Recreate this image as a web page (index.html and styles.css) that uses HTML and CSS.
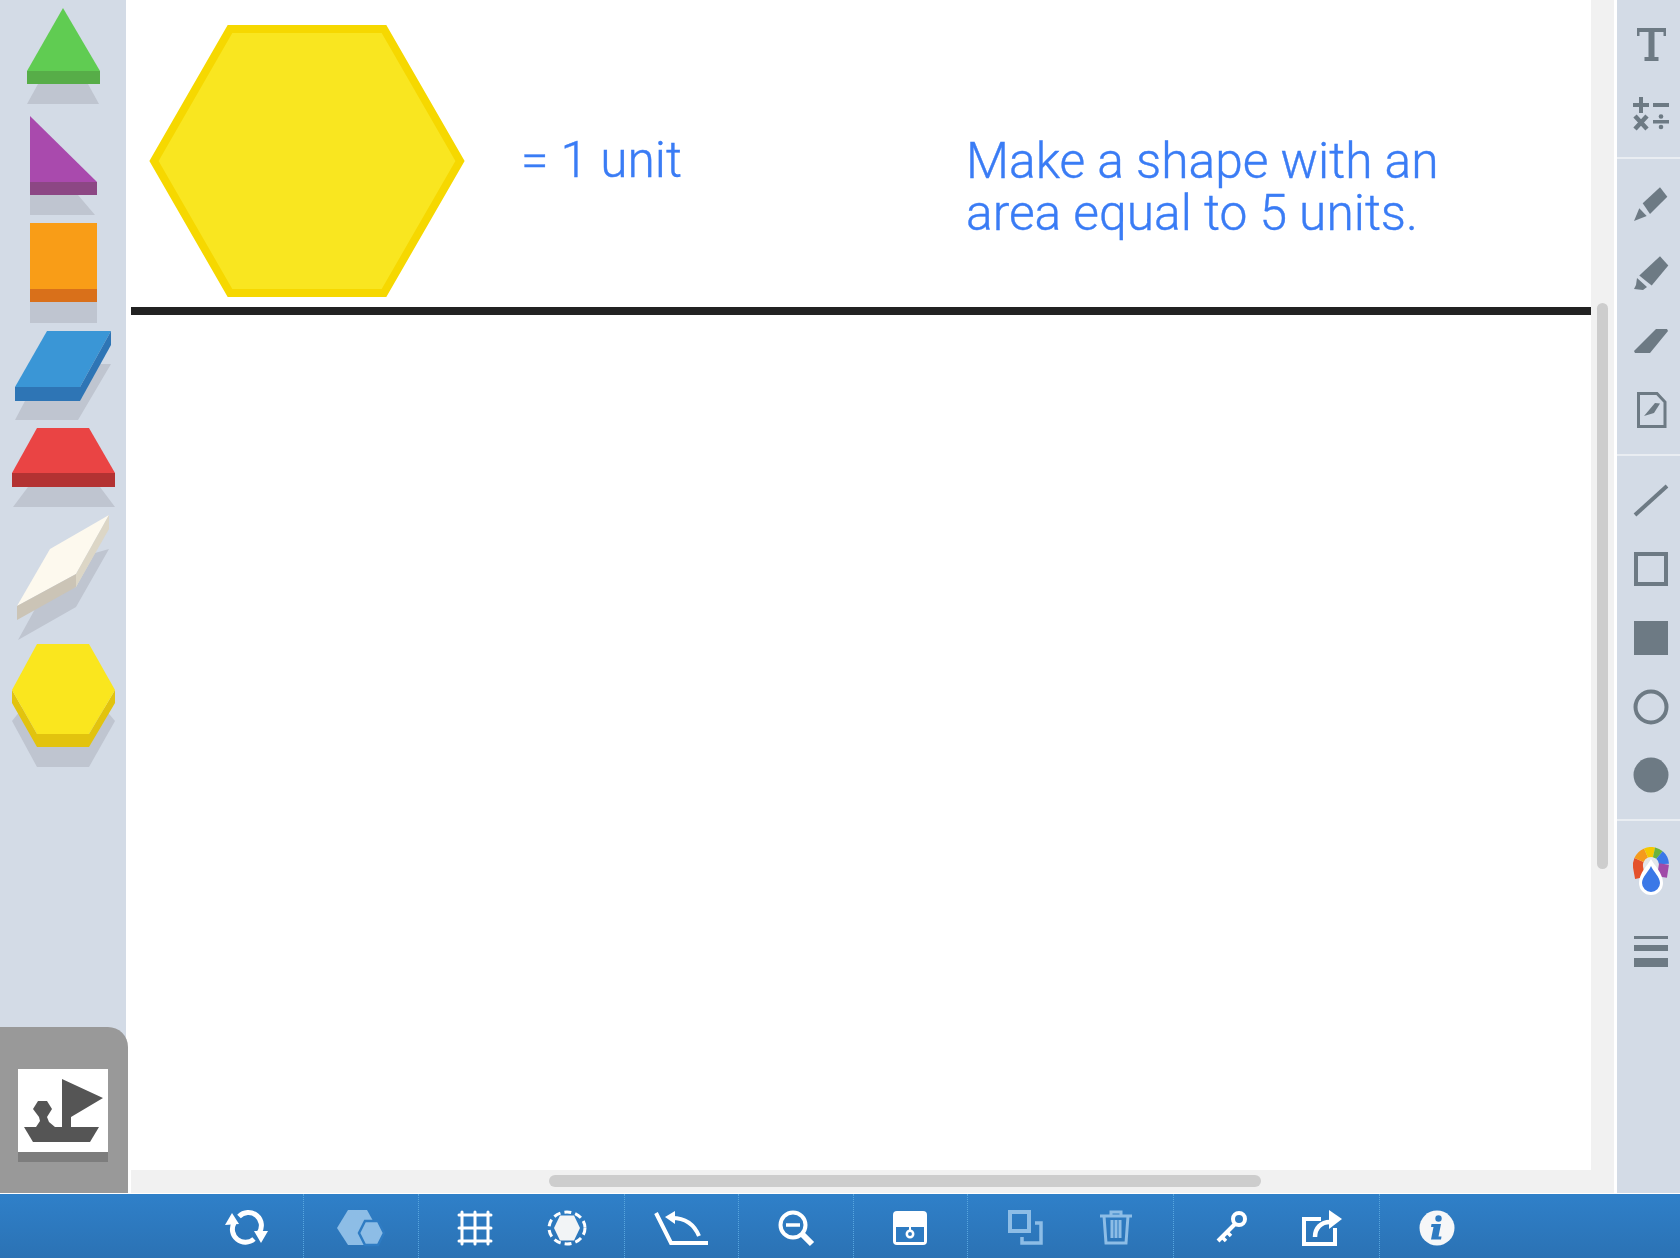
FILE: index.html
```html
<!DOCTYPE html>
<html lang="en">
<head>
    <meta charset="UTF-8">
    <meta name="viewport" content="width=device-width, initial-scale=1.0">
    <title>Pattern Shapes</title>
    <link rel="stylesheet" href="styles.css">
</head>
<body>
    <div class="app">
        <!-- Shape tray -->
        <aside class="tray">
            <svg class="piece piece-green" viewBox="0 0 126 110">
                <polygon class="shadow" points="38,84 88,84 99,104 27,104"/>
                <polygon fill="#60cc52" points="63,8 100,71 27,71"/>
                <rect fill="#57ad48" x="27" y="71" width="73" height="13"/>
            </svg>
            <svg class="piece piece-purple" viewBox="0 110 126 110">
                <polygon class="shadow" points="30,195 78,195 95,215 30,215"/>
                <polygon fill="#a94aad" points="30,116 97,182 30,182"/>
                <rect fill="#8c4784" x="30" y="182" width="67" height="13"/>
            </svg>
            <svg class="piece piece-orange" viewBox="0 220 126 106">
                <rect class="shadow" x="30" y="302" width="67" height="21"/>
                <rect fill="#f99d17" x="30" y="223" width="67" height="66"/>
                <rect fill="#d9701a" x="30" y="289" width="67" height="13"/>
            </svg>
            <svg class="piece piece-blue" viewBox="0 326 126 99">
                <polygon class="shadow" points="94,364 111,364 78,420 15,420 25,401 80,401"/>
                <polygon fill="#3a96d6" points="47,331 111,331 80,387 15,387"/>
                <rect fill="#2e75b5" x="15" y="387" width="65" height="14"/>
                <polygon fill="#2e75b5" points="111,331 111,345 80,401 80,387"/>
            </svg>
            <svg class="piece piece-red" viewBox="0 425 126 85">
                <polygon class="shadow" points="28,487 100,487 115,507 13,507"/>
                <polygon fill="#ea4444" points="37,428 89,428 115,473 12,473"/>
                <rect fill="#b33232" x="12" y="473" width="103" height="14"/>
            </svg>
            <svg class="piece piece-white" viewBox="0 510 126 132">
                <polygon class="shadow" points="109,549 76,607 18,640 40,600 76,587 95,553"/>
                <polygon fill="#fdf9ee" points="109,515 76,574 17,606 50,549"/>
                <polygon fill="#cbc4b6" points="17,606 76,574 76,587 17,620"/>
                <polygon fill="#dcd6c6" points="109,515 109,529 76,587 76,574"/>
            </svg>
            <svg class="piece piece-yellow" viewBox="0 642 126 128">
                <polygon class="shadow" points="12,721 37,690 89,690 115,721 89,767 37,767"/>
                <polygon fill="#e2c30e" points="12,690 12,703 37,747 89,747 115,703 115,690 89,734 37,734"/>
                <polygon fill="#fae61e" points="37,644 89,644 115,690 89,734 37,734 12,690"/>
            </svg>

            <!-- Scene picker -->
            <div class="scene-panel">
                <div class="scene-tile">
                    <svg class="scene-boat" viewBox="0 0 90 83">
                        <polygon points="44,10 85,29 53,48 53,58 44,58"/>
                        <polygon points="6,58 81,58 72,73 15,73"/>
                        <polygon points="15,40 20,32 29,32 34,40 29,48 31,53 37,58 18,58 22,52 21,48"/>
                    </svg>
                </div>
            </div>
        </aside>

        <!-- Work area -->
        <main class="work">
            <div class="work-top">
                <div class="canvas">
                    <svg class="unit-hex" viewBox="0 0 316 272">
                        <polygon fill="#f9e620" stroke="#f6d800" stroke-width="8" points="5,136 81,4 235,4 311,136 235,268 81,268"/>
                    </svg>
                    <p class="unit-label">= 1 unit</p>
                    <p class="task-text">Make a shape with an<br>area equal to 5 units.</p>
                    <div class="divider"></div>
                </div>
                <div class="vscroll"><div class="vscroll-thumb"></div></div>
            </div>
            <div class="hscroll"><div class="hscroll-thumb"></div></div>
        </main>

        <!-- Drawing tools -->
        <aside class="tools">
            <div class="tool-group">
                <div class="tool"><svg class="icon" viewBox="0 0 36 36"><path d="M4 1h29v8h-2.500V5H21.500v25h4v4h-14v-4h4V5H6.500v4H4z"/></svg></div>
                <div class="tool">
                    <svg class="icon" viewBox="0 0 36 36">
                        <path d="M6 1h4v6h6v4h-6v6H6v-6H0V7h6zM20 7h16v4H20zM20 24h16v3.500H20z"/>
                        <circle cx="28" cy="20.500" r="2.300"/><circle cx="28" cy="31" r="2.300"/>
                        <path class="line" stroke-width="4.500" d="M2 20l12 13M14 20L2 33"/>
                    </svg>
                </div>
            </div>
            <div class="tool-group">
                <div class="tool"><svg class="icon" viewBox="0 0 36 36"><polygon points="9.700,17.300 27,1.300 34.300,10.700 17,28"/><polygon points="1,35 6.300,22.300 13.700,30"/></svg></div>
                <div class="tool"><svg class="icon" viewBox="0 0 36 36"><polygon points="6.300,20.500 27,1.200 35.300,10.500 18.700,30.500 13,26"/><polygon points="4,23 14,32 10,35 1,34 3,30"/></svg></div>
                <div class="tool"><svg class="icon" viewBox="0 0 36 36"><polygon points="23,5 34,5 35,7 17,29 2,29 1,27"/></svg></div>
                <div class="tool">
                    <svg class="icon" viewBox="0 0 36 36">
                        <path class="line" stroke-width="3" d="M5.500 1.500H24L32 10v24.500H5.500z"/>
                        <polygon points="22,11 27,11.500 21,21 11,24"/>
                    </svg>
                </div>
            </div>
            <div class="tool-group">
                <div class="tool"><svg class="icon" viewBox="0 0 36 36"><path class="line" stroke-width="4" d="M2 32L34 3"/></svg></div>
                <div class="tool"><svg class="icon" viewBox="0 0 36 36"><rect class="line" stroke-width="4" x="3" y="3" width="30" height="30"/></svg></div>
                <div class="tool"><svg class="icon" viewBox="0 0 36 36"><rect x="1" y="1" width="34" height="34"/></svg></div>
                <div class="tool"><svg class="icon" viewBox="0 0 36 36"><circle class="line" stroke-width="4" cx="18" cy="18" r="15.500"/></svg></div>
                <div class="tool"><svg class="icon" viewBox="0 0 36 36"><circle cx="18" cy="18" r="17.500"/></svg></div>
            </div>
            <div class="tool-group tool-group-last">
                <div class="tool">
                    <svg class="wheel" viewBox="0 0 48 48">
                        <circle cx="24" cy="18" r="10" fill="#e3e6ea"/>
                        <g fill="none" stroke-width="10">
                            <path stroke="#e4512b" d="M13 31L11 20A13 13 0 0 1 12 13"/>
                            <path stroke="#f59a1c" d="M12 13A13 13 0 0 1 19 6"/>
                            <path stroke="#f5c800" d="M19 6A13 13 0 0 1 27 5.300"/>
                            <path stroke="#6ab33e" d="M27 5.300A13 13 0 0 1 32.500 8"/>
                            <path stroke="#3b78e7" d="M32.500 8A13 13 0 0 1 37 17"/>
                            <path stroke="#a04ba8" d="M37 17L35 30"/>
                        </g>
                        <path fill="#fff" d="M24 12c3 6 12 14 12 24a12 12 0 0 1-24 0c0-10 9-18 12-24z"/>
                        <path fill="#3b78e7" d="M24 19c2 5 9 11 9 17a9 9 0 0 1-18 0c0-6 7-12 9-17z"/>
                    </svg>
                </div>
                <div class="tool">
                    <svg class="icon" viewBox="0 0 36 36">
                        <rect x="1" y="3" width="34" height="3"/>
                        <rect x="1" y="12" width="34" height="6"/>
                        <rect x="1" y="25" width="34" height="9"/>
                    </svg>
                </div>
            </div>
        </aside>

        <!-- Bottom toolbar -->
        <footer class="bar">
            <div class="bar-group bar-group-first">
                <div class="bar-btn">
                    <svg class="bar-icon" width="43" height="36" viewBox="0 0 43 36">
                        <path class="stroke" stroke-width="5" d="M29 29A13 13 0 0 1 9 13M14 6.500A13 13 0 0 1 34 23"/>
                        <polygon points="0,15 14,14 7,3"/><polygon points="29,21 43,21 36,33"/>
                    </svg>
                </div>
            </div>
            <div class="bar-group">
                <div class="bar-btn">
                    <svg class="bar-icon" width="47" height="36" viewBox="0 0 47 36">
                        <polygon class="pale-fill" points="0,18 11,0 30,0 40,18 30,35 11,35"/>
                        <polygon class="pale-fill hex-front" points="22,23 28,11 41,11 47,23 41,35 28,35"/>
                    </svg>
                </div>
            </div>
            <div class="bar-group">
                <div class="bar-btn">
                    <svg class="bar-icon" width="36" height="36" viewBox="0 0 36 36">
                        <path class="stroke" stroke-width="3" stroke-linecap="round" d="M5 2v32M18 2v32M31 2v32M2 5h32M2 18h32M2 31h32"/>
                    </svg>
                </div>
                <div class="bar-btn">
                    <svg class="bar-icon" width="40" height="36" viewBox="0 0 40 36">
                        <polygon fill="#f2f4f6" points="7,18 13,5.500 27,5.500 33,18 27,30.500 13,30.500"/>
                        <ellipse class="stroke" stroke-width="3" stroke-dasharray="7 4" cx="20" cy="18" rx="18" ry="16"/>
                    </svg>
                </div>
            </div>
            <div class="bar-group">
                <div class="bar-btn">
                    <svg class="bar-icon" width="54" height="36" viewBox="0 0 54 36">
                        <path class="stroke" stroke-width="4" d="M2 3l15 30h37"/>
                        <path class="stroke" stroke-width="4" d="M18 8c12 0 22 6 27 18"/>
                        <polygon points="11,7 21,1 21,14"/>
                    </svg>
                </div>
            </div>
            <div class="bar-group">
                <div class="bar-btn">
                    <svg class="bar-icon" width="36" height="36" viewBox="0 0 36 36">
                        <circle class="stroke" stroke-width="4" cx="15" cy="15" r="12.500"/>
                        <path class="stroke" stroke-width="3.500" d="M8 15h14"/>
                        <path class="stroke" stroke-width="6" d="M24 24l10 10"/>
                    </svg>
                </div>
            </div>
            <div class="bar-group">
                <div class="bar-btn">
                    <svg class="bar-icon" width="34" height="34" viewBox="0 0 34 34">
                        <rect fill="#fff" width="34" height="34" rx="4"/>
                        <rect class="bar-hole" x="3" y="16" width="28" height="15"/>
                        <path class="stroke" stroke-width="2" d="M17 16v4"/>
                        <circle class="stroke" stroke-width="2.500" cx="17" cy="23" r="3.200"/>
                    </svg>
                </div>
            </div>
            <div class="bar-group">
                <div class="bar-btn">
                    <svg class="bar-icon" width="35" height="35" viewBox="0 0 35 35">
                        <rect class="pale-stroke" stroke-width="4" x="2" y="2" width="19" height="19"/>
                        <path class="pale-stroke" stroke-width="3.500" d="M27 13h6v20H14v-6"/>
                    </svg>
                </div>
                <div class="bar-btn">
                    <svg class="bar-icon" width="32" height="35" viewBox="0 0 32 35">
                        <path class="pale-stroke" stroke-width="3" d="M0 6h32M11 5V2h10v3M4 6l2 27h20l2-27M12 10v18M16 10v18M20 10v18"/>
                    </svg>
                </div>
            </div>
            <div class="bar-group">
                <div class="bar-btn">
                    <svg class="bar-icon" width="33" height="34" viewBox="0 0 33 34">
                        <circle class="stroke" stroke-width="4" cx="24" cy="8" r="6"/>
                        <path class="stroke" stroke-width="4" d="M20 13L3 30"/>
                        <path class="stroke" stroke-width="3.500" d="M6 25l5 5M11 20l5 5"/>
                    </svg>
                </div>
                <div class="bar-btn">
                    <svg class="bar-icon" width="40" height="36" viewBox="0 0 40 36">
                        <path class="stroke" stroke-width="4" d="M19 9H2v25h31V18"/>
                        <path class="stroke" stroke-width="4.500" d="M13 27c0-9 6-15 15-15"/>
                        <polygon points="27,0 40,9 27,19"/>
                    </svg>
                </div>
            </div>
            <div class="bar-group bar-group-last">
                <div class="bar-btn">
                    <svg class="bar-icon" width="36" height="36" viewBox="0 0 36 36">
                        <circle fill="#f6f7f8" cx="18" cy="18" r="17.500"/>
                        <circle class="info-mark" cx="19.500" cy="8.500" r="3.200"/>
                        <path class="info-mark" d="M12.500 14h9.500l-2.500 12.500h3l-.5 3h-10l2.500-12.500h-2.500z"/>
                    </svg>
                </div>
            </div>
        </footer>
    </div>
</body>
</html>
```

FILE: styles.css
```css
* {
    box-sizing: border-box;
}

body {
    margin: 0;
    background-color: #fff;
    font-family: Roboto, "Liberation Sans", sans-serif;
}

.app {
    display: grid;
    grid-template-columns: 126px 1fr 63px;
    grid-template-rows: 1193px 65px;
    height: 100vh;
    overflow: hidden;
}

/* Shape tray */
.tray {
    display: flex;
    flex-direction: column;
    background-color: #d3dbe6;
}

.piece {
    display: block;
    width: 126px;
    flex: none;
}

.piece-green, .piece-purple { height: 110px; }
.piece-orange { height: 106px; }
.piece-blue { height: 99px; }
.piece-red { height: 85px; }
.piece-white { height: 132px; }
.piece-yellow { height: 128px; }

.shadow {
    fill: #bfc5d0;
}

.scene-panel {
    margin-top: auto;
    width: 128px;
    height: 166px;
    padding: 42px 0 0 18px;
    background-color: #999;
    border-top-right-radius: 20px;
    flex: none;
    position: relative;
}

.scene-tile {
    width: 90px;
    height: 93px;
    background-color: #fff;
    border-bottom: 10px solid #7d7d7d;
}

.scene-boat {
    display: block;
    width: 90px;
    height: 83px;
    fill: #555;
}

/* Work area */
.work {
    display: flex;
    flex-direction: column;
    background-color: #fff;
}

.work-top {
    flex: 1;
    display: flex;
    padding-left: 5px;
    padding-right: 3px;
}

.canvas {
    flex: 1;
    position: relative;
    color: #3a7cf5;
    font-size: 49.7px;
    font-weight: 300;
    line-height: 52px;
    -webkit-text-stroke: 0.4px #3a7cf5;
}

.unit-hex {
    position: absolute;
    left: 18px;
    top: 25px;
    width: 316px;
    height: 272px;
}

.unit-label {
    position: absolute;
    left: 390px;
    top: 134px;
    margin: 0;
}

.task-text {
    position: absolute;
    left: 835px;
    top: 135px;
    margin: 0;
}

.divider {
    position: absolute;
    left: 0;
    right: 0;
    top: 307px;
    height: 8px;
    background-color: #222;
}

.vscroll {
    width: 23px;
    padding: 303px 6px 0;
    background-color: #f1f1f1;
}

.vscroll-thumb {
    height: 566px;
    background-color: #cdcdcd;
    border-radius: 6px;
}

.hscroll {
    height: 23px;
    margin: 0 3px 0 5px;
    padding: 5px 0 0 418px;
    background-color: #f1f1f1;
}

.hscroll-thumb {
    width: 712px;
    height: 12px;
    background-color: #cdcdcd;
    border-radius: 6px;
}

/* Drawing tools */
.tools {
    background-color: #d3dbe6;
}

.tool-group {
    padding: 11px 0 9px;
    border-bottom: 2px solid #e9edf2;
}

.tool-group-last {
    padding-top: 16px;
    border-bottom: none;
}

.tool {
    display: flex;
    align-items: center;
    justify-content: center;
    height: 68.6px;
    padding-left: 5px;
}

.tool-group-last .tool + .tool {
    margin-top: 12px;
}

.icon {
    width: 36px;
    height: 36px;
    fill: #6d7a84;
    overflow: visible;
}

.icon .line {
    fill: none;
    stroke: #6d7a84;
}

.wheel {
    width: 48px;
    height: 48px;
    flex: none;
}

/* Bottom toolbar */
.bar {
    grid-column: 1 / -1;
    display: flex;
    border-top: 1px solid #fff;
    background: linear-gradient(#2f80c9, #2b72b4);
}

.bar-group {
    display: flex;
    padding: 0 11.1px;
    border-right: 1px dotted #58a6de;
}

.bar-group-first {
    width: 304px;
    justify-content: flex-end;
}

.bar-group-last {
    border-right: none;
}

.bar-btn {
    width: 91.4px;
    display: flex;
    align-items: center;
    justify-content: center;
}

.bar-icon {
    fill: #fff;
    overflow: visible;
    margin-top: 3px;
}

.stroke {
    fill: none;
    stroke: #fff;
}

.pale-fill {
    fill: #8dbde6;
}

.hex-front {
    stroke: #2f7cc3;
    stroke-width: 2.5;
}

.pale-stroke {
    fill: none;
    stroke: #8dbde6;
}

.bar-hole {
    fill: #2e7bc2;
}

.info-mark {
    fill: #2e7bc2;
}
```
